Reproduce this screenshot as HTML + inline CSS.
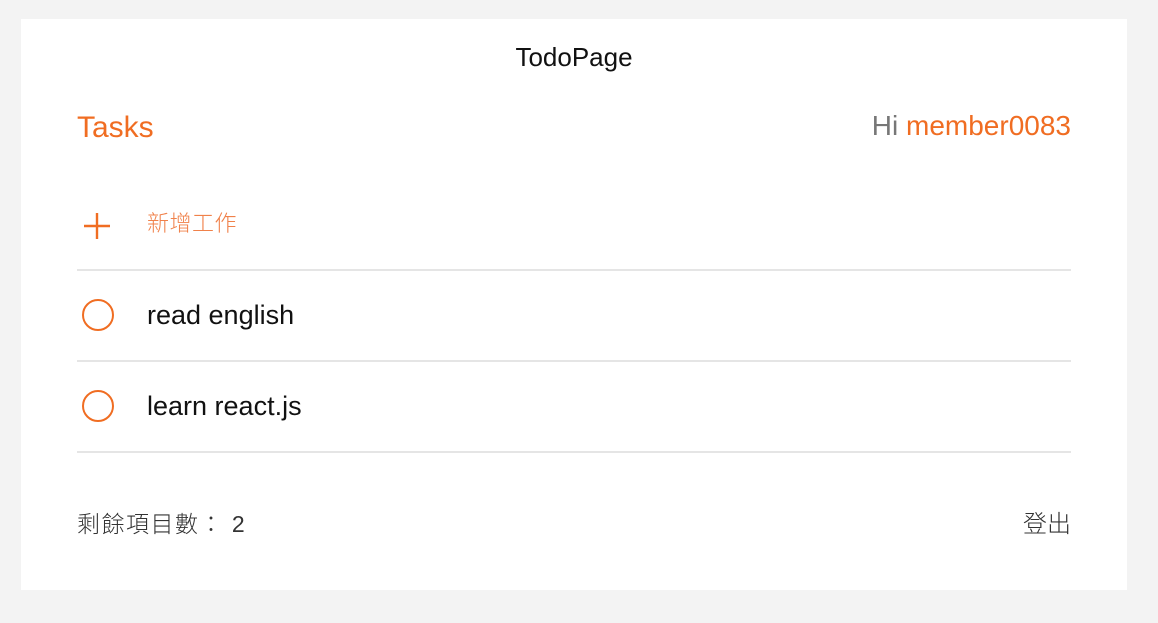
<!DOCTYPE html>
<html><head><meta charset="utf-8"><style>
body{margin:0;background:#f3f3f3;width:1158px;height:623px;font-family:"Liberation Sans","Noto Sans CJK TC",sans-serif;position:relative;overflow:hidden}
.card{position:absolute;left:21px;top:19px;width:1106px;height:571px;background:#fff}
.a{position:absolute;white-space:nowrap;line-height:1}
.line{position:absolute;left:56px;width:994px;height:2px;background:#e5e5e5}
.c{position:absolute;left:61px;width:28px;height:28px;border:2px solid #f06d22;border-radius:50%}
</style></head><body><div class="card">
<div class="a" style="left:0;width:1106px;text-align:center;top:25px;font-size:26px;color:#111">TodoPage</div>
<div class="a" style="left:56px;top:94px;font-size:30px;color:#f06d22">Tasks</div>
<div class="a" style="right:56px;top:93px;font-size:28px;color:#777">Hi <span style="color:#f06d22">member0083</span></div>
<svg style="position:absolute;left:62px;top:193px" width="28" height="28"><path d="M14 1V27M1 14H27" stroke="#f06d22" stroke-width="2.4"/></svg>
<div class="a" style="left:126px;top:194px;font-size:22px;color:#f0814a;font-weight:300;letter-spacing:0.5px">新增工作</div>
<div class="line" style="top:250px"></div>
<div class="c" style="top:280px"></div>
<div class="a" style="left:126px;top:283px;font-size:27px;color:#111">read english</div>
<div class="line" style="top:341px"></div>
<div class="c" style="top:371px"></div>
<div class="a" style="left:126px;top:374px;font-size:27px;color:#111">learn react.js</div>
<div class="line" style="top:432px"></div>
<div class="a" style="left:56px;top:494px;font-size:23px;color:#333;font-weight:300;letter-spacing:1.5px">剩餘項目數： 2</div>
<div class="a" style="right:56px;top:494px;font-size:24px;color:#333;font-weight:300">登出</div>
</div></body></html>
